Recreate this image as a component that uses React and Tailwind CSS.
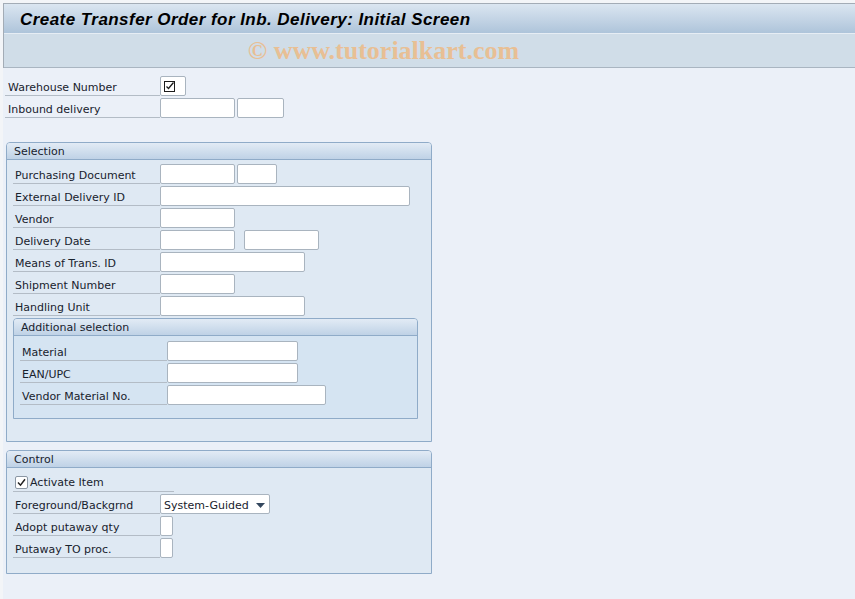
import React from 'react';

function Input({ w, className = '' }) {
  return (
    <div
      className={`h-[20px] bg-white border border-[#a9b4bf] rounded-[2px] ${className}`}
      style={{ width: w }}
    />
  );
}

function FieldRow({ label, labelW, children }) {
  return (
    <div className="flex h-[20px] items-stretch">
      <div
        className="flex items-center pl-[2px] pt-[3px] border-b border-[#b3bcc6] text-[#18222d] whitespace-nowrap"
        style={{ width: labelW }}
      >
        {label}
      </div>
      <div className="flex gap-[2px]">{children}</div>
    </div>
  );
}

function GroupBox({ title, className = '', bodyClass = '', children }) {
  return (
    <div className={`border border-[#8fabc8] rounded-t-[4px] ${className}`}>
      <div className="h-[17px] flex items-center pl-[7px] pt-[1px] border-b border-[#8fabc8] rounded-t-[3px] bg-gradient-to-b from-[#e2ebf5] to-[#bfd2e6] text-[#18222d]">
        {title}
      </div>
      <div className={bodyClass}>{children}</div>
    </div>
  );
}

function CheckGlyph() {
  return (
    <svg width="11" height="11" viewBox="0 0 11 11">
      <rect x="0.5" y="0.5" width="10" height="10" fill="none" stroke="#1b1b1b" />
      <path d="M2.5 5.5 L4.5 7.5 L9.5 1.5" fill="none" stroke="#1b1b1b" strokeWidth="1.3" />
    </svg>
  );
}

export default function App() {
  return (
    <div className="w-[855px] min-h-[599px] bg-[#f3f5f8] pl-[3px] pt-[3px] font-['DejaVu_Sans',sans-serif] text-[11px] leading-none">
      <div className="border-l border-t border-[#a3acb6]">
        <div className="h-[30px] flex items-center pl-[16px] pt-[1px] bg-gradient-to-b from-[#dbe6f1] to-[#aec4da] border-b border-[#e6edf4]">
          <span className="font-['Liberation_Sans',sans-serif] font-bold italic text-[17px] tracking-[0.45px] text-black">
            Create Transfer Order for Inb. Delivery: Initial Screen
          </span>
        </div>
        <div className="h-[34px] flex items-center justify-center bg-[#d0dde8] border-b border-[#a9b5c1] pr-[92px]">
          <span className="font-['Liberation_Serif',serif] font-bold text-[26px] text-[#ebbc8c] opacity-90">
            © www.tutorialkart.com
          </span>
        </div>
      </div>

      <div className="bg-[#ebf0f8] min-h-[531px] pt-[8px] pl-[2px]">
        <div className="flex flex-col gap-[2px]">
          <FieldRow label={<span className="pl-[1px]">Warehouse Number</span>} labelW={155}>
            <div className="w-[26px] h-[20px] bg-white border border-[#a9b4bf] rounded-[2px] flex items-center pl-[3px]">
              <CheckGlyph />
            </div>
          </FieldRow>
          <FieldRow label={<span className="pl-[1px]">Inbound delivery</span>} labelW={155}>
            <Input w={75} />
            <Input w={47} />
          </FieldRow>
        </div>

        <GroupBox
          title="Selection"
          className="mt-[24px] ml-[1px] w-[426px] h-[300px] bg-[#dfe9f3]"
          bodyClass="pt-[4px] pl-[6px]"
        >
          <div className="flex flex-col gap-[2px]">
            <FieldRow label="Purchasing Document" labelW={147}>
              <Input w={75} />
              <Input w={40} />
            </FieldRow>
            <FieldRow label="External Delivery ID" labelW={147}>
              <Input w={250} />
            </FieldRow>
            <FieldRow label="Vendor" labelW={147}>
              <Input w={75} />
            </FieldRow>
            <FieldRow label="Delivery Date" labelW={147}>
              <Input w={75} />
              <Input w={75} className="ml-[7px]" />
            </FieldRow>
            <FieldRow label="Means of Trans. ID" labelW={147}>
              <Input w={145} />
            </FieldRow>
            <FieldRow label="Shipment Number" labelW={147}>
              <Input w={75} />
            </FieldRow>
            <FieldRow label="Handling Unit" labelW={147}>
              <Input w={145} />
            </FieldRow>
          </div>
          <GroupBox
            title="Additional selection"
            className="mt-[2px] w-[405px] h-[101px] bg-[#d5e4f2]"
            bodyClass="pt-[5px] pl-[6px]"
          >
            <div className="flex flex-col gap-[2px]">
              <FieldRow label="Material" labelW={147}>
                <Input w={131} />
              </FieldRow>
              <FieldRow label="EAN/UPC" labelW={147}>
                <Input w={131} />
              </FieldRow>
              <FieldRow label="Vendor Material No." labelW={147}>
                <Input w={159} />
              </FieldRow>
            </div>
          </GroupBox>
        </GroupBox>

        <GroupBox
          title="Control"
          className="mt-[8px] ml-[1px] w-[426px] h-[124px] bg-[#dfe9f3]"
          bodyClass="pt-[4px] pl-[6px]"
        >
          <div className="flex flex-col gap-[2px]">
            <div className="flex h-[20px] items-center w-[161px] border-b border-[#b3bcc6] pl-[2px] pt-[1px] text-[#18222d]">
              <div className="w-[13px] h-[13px] bg-white border border-[#8a96a3] rounded-[2px] flex items-center justify-center mr-[2px]">
                <svg width="9" height="9" viewBox="0 0 9 9">
                  <path d="M1 4.5 L3.5 7.2 L8 1.2" fill="none" stroke="#222" strokeWidth="1.5" />
                </svg>
              </div>
              Activate Item
            </div>
            <FieldRow label="Foreground/Backgrnd" labelW={147}>
              <div className="w-[110px] h-[20px] bg-white border border-[#a9b4bf] rounded-[2px] flex items-center pl-[3px] pt-[2px] pr-[4px] justify-between text-[#18222d]">
                System-Guided
                <svg width="9" height="5" viewBox="0 0 9 5">
                  <path d="M0 0 H9 L4.5 5 Z" fill="#34475e" />
                </svg>
              </div>
            </FieldRow>
            <FieldRow label="Adopt putaway qty" labelW={147}>
              <Input w={13} />
            </FieldRow>
            <FieldRow label="Putaway TO proc." labelW={147}>
              <Input w={13} />
            </FieldRow>
          </div>
        </GroupBox>
      </div>
    </div>
  );
}
